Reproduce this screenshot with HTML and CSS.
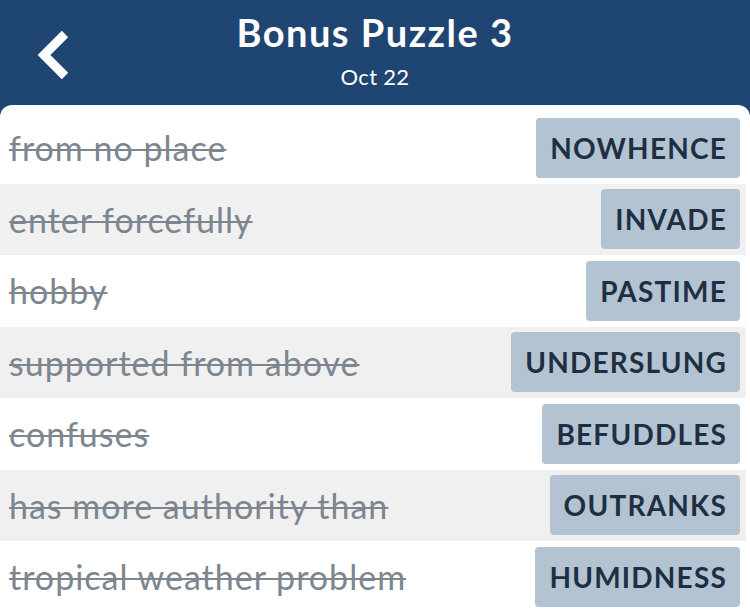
FILE: index.html
```html
<!DOCTYPE html>
<html lang="en">
<head>
  <meta charset="UTF-8" />
  <meta name="viewport" content="width=device-width,initial-scale=1" />
  <title>Bonus Puzzle 3</title>
  <link rel="stylesheet" href="styles.css">
</head>
<body>

  <header class="topbar">
    <a class="back" href="#" aria-label="Back">
      <svg width="34" height="50" viewBox="0 0 34 50">
        <polyline points="29,4 8,25 29,46" fill="none" stroke="#fff" stroke-width="9" stroke-linecap="butt" stroke-linejoin="miter" />
      </svg>
    </a>
    <div class="titles">
      <h1>Bonus Puzzle 3</h1>
      <p>Oct 22</p>
    </div>
  </header>

  <main class="card">
    <div class="row">
      <span class="clue">from no place</span>
      <span class="answer">NOWHENCE</span>
    </div>
    <div class="row">
      <span class="clue">enter forcefully</span>
      <span class="answer">INVADE</span>
    </div>
    <div class="row">
      <span class="clue">hobby</span>
      <span class="answer">PASTIME</span>
    </div>
    <div class="row">
      <span class="clue">supported from above</span>
      <span class="answer">UNDERSLUNG</span>
    </div>
    <div class="row">
      <span class="clue">confuses</span>
      <span class="answer">BEFUDDLES</span>
    </div>
    <div class="row">
      <span class="clue">has more authority than</span>
      <span class="answer">OUTRANKS</span>
    </div>
    <div class="row">
      <span class="clue">tropical weather problem</span>
      <span class="answer">HUMIDNESS</span>
    </div>
  </main>

</body>
</html>
```

FILE: styles.css
```css
body {
  font-family: Lato, "Open Sans", Arial, sans-serif;
  background: #1f4573;
  margin: 0;
  padding: 0;
  display: flex;
  flex-direction: column;
  min-height: 100vh;
  overflow: hidden;
}
.topbar {
  position: relative;
  height: 105px;
  display: flex;
  justify-content: center;
}
.back {
  position: absolute;
  left: 36px;
  top: 30px;
  display: block;
  width: 34px;
  height: 50px;
}
.titles {
  text-align: center;
  color: #fff;
}
.titles h1 {
  margin: 9px 0 0;
  font-size: 38px;
  font-weight: 700;
  line-height: 46px;
  letter-spacing: 1.5px;
}
.titles p {
  margin: 8px 0 0;
  font-size: 22px;
  line-height: 28px;
  letter-spacing: .3px;
}
.card {
  flex: 1;
  background: #fff;
  border-radius: 12px 12px 0 0;
  padding: 7px 4px 0 0;
}
.row {
  height: 71.5px;
  display: flex;
  align-items: center;
  justify-content: space-between;
  padding: 0 6px 0 9px;
  box-sizing: border-box;
}
.row:nth-child(even) {
  background: #f0f0f0;
}
.clue {
  font-size: 34px;
  color: #7d868f;
  letter-spacing: 1px;
  text-decoration: line-through;
  text-decoration-thickness: 2px;
}
.answer {
  background: #b3c3d1;
  color: #1e2f44;
  font-size: 28px;
  font-weight: 700;
  letter-spacing: 1.2px;
  height: 60px;
  line-height: 60px;
  padding: 0 13px 0 14px;
  border-radius: 4px;
}
```
